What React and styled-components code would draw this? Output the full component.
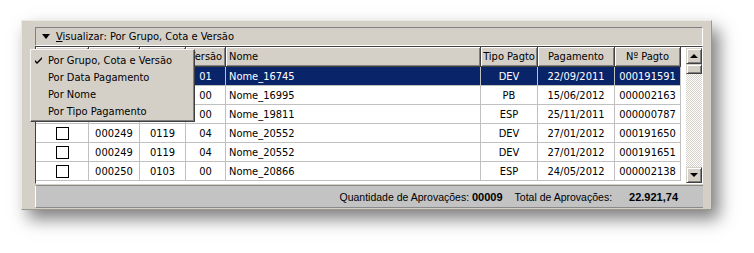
import React from 'react';
import styled, { createGlobalStyle } from 'styled-components';

const GlobalStyle = createGlobalStyle`
  body {
    margin: 0;
    background: #fff;
    font-family: "DejaVu Sans Condensed", "DejaVu Sans", sans-serif;
    font-stretch: condensed;
    font-size: 11px;
    color: #000;
  }
`;

const cols = '53px 51px 46px 40px 255px 57px 77px 66px';

// the first three rows lie under the open menu, so their group/quota cells stay empty
const rows = [
  ['', '', '01', 'Nome_16745', 'DEV', '22/09/2011', '000191591'],
  ['', '', '00', 'Nome_16995', 'PB', '15/06/2012', '000002163'],
  ['', '', '00', 'Nome_19811', 'ESP', '25/11/2011', '000000787'],
  ['000249', '0119', '04', 'Nome_20552', 'DEV', '27/01/2012', '000191650'],
  ['000249', '0119', '04', 'Nome_20552', 'DEV', '27/01/2012', '000191651'],
  ['000250', '0103', '00', 'Nome_20866', 'ESP', '24/05/2012', '000002138'],
];

const menuItems = ['Por Grupo, Cota e Versão', 'Por Data Pagamento', 'Por Nome', 'Por Tipo Pagamento'];

export default function App() {
  return (
    <Page>
      <GlobalStyle />
      <Window>
        <ViewBar>
          <Arrow />
          <span><u>V</u>isualizar: Por Grupo, Cota e Versão</span>
        </ViewBar>
        <GridFrame>
          <Grid>
            <HeaderRow>
              <HeadCell />
              <HeadCell />
              <HeadCell />
              <HeadCell>Versão</HeadCell>
              <HeadCell $left>Nome</HeadCell>
              <HeadCell>Tipo Pagto</HeadCell>
              <HeadCell>Pagamento</HeadCell>
              <HeadCell>Nº Pagto</HeadCell>
            </HeaderRow>
            {rows.map((r, i) => (
              <Row key={i} $selected={i === 0}>
                <Cell>{i > 2 && <CheckBox />}</Cell>
                {r.map((v, j) => (
                  <Cell key={j} $left={j === 3}>{v}</Cell>
                ))}
              </Row>
            ))}
          </Grid>
          <ScrollBar>
            <ScrollButton><UpArrow /></ScrollButton>
            <Thumb />
            <Track />
            <ScrollButton><DownArrow /></ScrollButton>
          </ScrollBar>
        </GridFrame>
        <StatusBar>
          <span>Quantidade de Aprovações: <b>00009</b></span>
          <TotalLabel>Total de Aprovações:</TotalLabel>
          <TotalValue>22.921,74</TotalValue>
        </StatusBar>
        <Menu>
          {menuItems.map((m, i) => (
            <MenuItem key={m}>
              {i === 0 && (
                <Check viewBox="0 0 7 7">
                  <path d="M0 3 L2 5 L7 0 L7 2 L2 7 L0 5 Z" fill="#000" />
                </Check>
              )}
              {m}
            </MenuItem>
          ))}
        </Menu>
      </Window>
    </Page>
  );
}

const Page = styled.div`
  width: 754px;
  height: 253px;
  padding: 20px 0 0 21px;
  box-sizing: border-box;
`;

const Window = styled.div`
  position: relative;
  width: 691px;
  height: 190px;
  box-sizing: border-box;
  background: #d4d0c8;
  border: 1px solid;
  border-color: #ebe9e4 #9a9892 #9a9892 #ebe9e4;
  box-shadow: 7px 9px 16px rgba(0, 0, 0, 0.5);
  padding: 6px 8px 1px 13px;
  display: flex;
  flex-direction: column;
`;

const ViewBar = styled.div`
  height: 19px;
  box-sizing: border-box;
  border: 1px solid;
  border-color: #808080 #fff #fff #808080;
  display: flex;
  align-items: center;
  gap: 6px;
  padding-left: 6px;
`;

const Arrow = styled.div`
  width: 0;
  height: 0;
  border-left: 4px solid transparent;
  border-right: 4px solid transparent;
  border-top: 5px solid #000;
`;

const GridFrame = styled.div`
  height: 138px;
  box-sizing: border-box;
  display: flex;
  background: #fff;
  border-top: 1px solid #404040;
  border-left: 1px solid #404040;
  border-right: 1px solid #fff;
  border-bottom: 1px solid #fff;
`;

const Grid = styled.div`
  width: 645px;
  display: flex;
  flex-direction: column;
`;

const HeaderRow = styled.div`
  display: grid;
  grid-template-columns: ${cols};
  height: 20px;
`;

const HeadCell = styled.div`
  box-sizing: border-box;
  background: #d4d0c8;
  border-right: 1px solid #404040;
  border-bottom: 1px solid #404040;
  box-shadow: inset 1px 1px 0 #fff, inset -1px -1px 0 #808080;
  display: flex;
  align-items: center;
  justify-content: ${p => (p.$left ? 'flex-start' : 'center')};
  padding-left: ${p => (p.$left ? '3px' : '0')};
  white-space: nowrap;
  overflow: hidden;
`;

const Row = styled.div`
  display: grid;
  grid-template-columns: ${cols};
  height: 19px;
  background: ${p => (p.$selected ? '#0a246a' : '#fff')};
  color: ${p => (p.$selected ? '#fff' : '#000')};
`;

const Cell = styled.div`
  box-sizing: border-box;
  border-right: 1px solid #c0c0c0;
  border-bottom: 1px solid #c0c0c0;
  display: flex;
  align-items: center;
  justify-content: ${p => (p.$left ? 'flex-start' : 'center')};
  padding-left: ${p => (p.$left ? '3px' : '0')};
  white-space: nowrap;
`;

const CheckBox = styled.div`
  width: 13px;
  height: 13px;
  box-sizing: border-box;
  border: 1px solid #000;
  background: #fff;
`;

const ScrollBar = styled.div`
  width: 16px;
  margin-left: 5px;
  padding-top: 1px;
  display: flex;
  flex-direction: column;
`;

const raised = `
  box-sizing: border-box;
  background: #d4d0c8;
  border: 1px solid;
  border-color: #d4d0c8 #404040 #404040 #d4d0c8;
  box-shadow: inset 1px 1px 0 #fff, inset -1px -1px 0 #808080;
`;

const ScrollButton = styled.div`
  ${raised}
  height: 16px;
  display: flex;
  align-items: center;
  justify-content: center;
`;

const UpArrow = styled.div`
  width: 0;
  height: 0;
  border-left: 4px solid transparent;
  border-right: 4px solid transparent;
  border-bottom: 4px solid #000;
`;

const DownArrow = styled(UpArrow)`
  border-bottom: 0;
  border-top: 4px solid #000;
`;

const Thumb = styled.div`
  ${raised}
  height: 10px;
`;

const Track = styled.div`
  flex: 1;
  background: repeating-conic-gradient(#fff 0 25%, #d4d0c8 0 50%) 0 0 / 2px 2px;
`;

const StatusBar = styled.div`
  margin-top: 1px;
  height: 23px;
  box-sizing: border-box;
  background: #c3c3c3;
  border-top: 1px solid #8a8a8a;
  border-left: 1px solid #fff;
  border-bottom: 1px solid #8a8a8a;
  display: flex;
  align-items: center;
  justify-content: flex-end;
  padding-right: 25px;
  white-space: nowrap;
  font-family: "Liberation Sans", Arial, sans-serif;
  font-stretch: normal;
  font-size: 10.5px;
  & b { font-weight: bold; font-size: 11px; }
`;

const TotalLabel = styled.span`
  margin-left: 12px;
`;

const TotalValue = styled.b`
  margin-left: 17px;
`;

const Menu = styled.div`
  position: absolute;
  left: 8px;
  top: 28px;
  width: 165px;
  height: 73px;
  box-sizing: border-box;
  background: #d4d0c8;
  border: 1px solid;
  border-color: #f4f3f0 #404040 #404040 #f4f3f0;
  box-shadow: inset -1px -1px 0 #808080;
  padding-top: 2px;
`;

const MenuItem = styled.div`
  position: relative;
  height: 17px;
  display: flex;
  align-items: center;
  padding-left: 17px;
  white-space: nowrap;
`;

const Check = styled.svg`
  position: absolute;
  left: 4px;
  top: 5px;
  width: 7px;
  height: 7px;
`;
